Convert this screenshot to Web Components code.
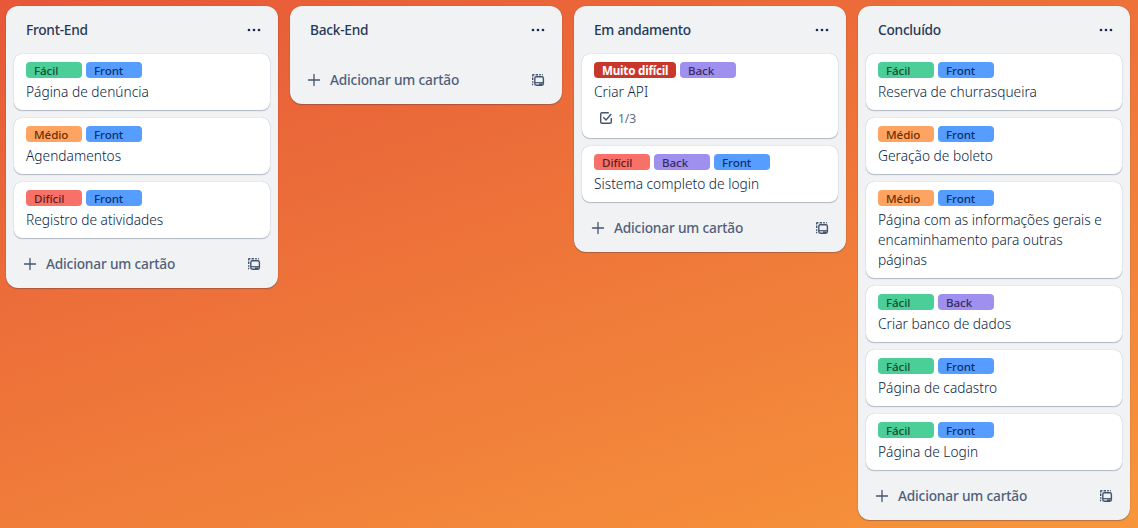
<!DOCTYPE html>
<html lang="pt-BR">
<head>
<meta charset="utf-8">
<title>Quadro</title>
<style>
html,body{margin:0;height:100%;overflow:hidden}
body{font-family:"Noto Sans","Open Sans",sans-serif;font-size:13.7px;line-height:20px;color:#253858}
</style>
</head>
<body>
<task-board>
  <task-list name="Front-End">
    <task-card><card-label slot="labels" kind="easy">Fácil</card-label><card-label slot="labels" kind="front">Front</card-label>Página de denúncia</task-card>
    <task-card><card-label slot="labels" kind="medium">Médio</card-label><card-label slot="labels" kind="front">Front</card-label>Agendamentos</task-card>
    <task-card><card-label slot="labels" kind="hard">Difícil</card-label><card-label slot="labels" kind="front">Front</card-label>Registro de atividades</task-card>
  </task-list>
  <task-list name="Back-End"></task-list>
  <task-list name="Em andamento">
    <task-card checks="1/3"><card-label slot="labels" kind="extreme">Muito difícil</card-label><card-label slot="labels" kind="back">Back</card-label>Criar API</task-card>
    <task-card><card-label slot="labels" kind="hard">Difícil</card-label><card-label slot="labels" kind="back">Back</card-label><card-label slot="labels" kind="front">Front</card-label>Sistema completo de login</task-card>
  </task-list>
  <task-list name="Concluído">
    <task-card><card-label slot="labels" kind="easy">Fácil</card-label><card-label slot="labels" kind="front">Front</card-label>Reserva de churrasqueira</task-card>
    <task-card><card-label slot="labels" kind="medium">Médio</card-label><card-label slot="labels" kind="front">Front</card-label>Geração de boleto</task-card>
    <task-card><card-label slot="labels" kind="medium">Médio</card-label><card-label slot="labels" kind="front">Front</card-label>Página com as informações gerais e encaminhamento para outras páginas</task-card>
    <task-card><card-label slot="labels" kind="easy">Fácil</card-label><card-label slot="labels" kind="back">Back</card-label>Criar banco de dados</task-card>
    <task-card><card-label slot="labels" kind="easy">Fácil</card-label><card-label slot="labels" kind="front">Front</card-label>Página de cadastro</task-card>
    <task-card><card-label slot="labels" kind="easy">Fácil</card-label><card-label slot="labels" kind="front">Front</card-label>Página de Login</task-card>
  </task-list>
</task-board>
<script>
const define = (name, html, setup) => customElements.define(name, class extends HTMLElement {
  constructor() {
    super();
    this.attachShadow({ mode: 'open' }).innerHTML = html;
  }
  connectedCallback() { if (setup) setup(this, this.shadowRoot); }
});

define('task-board', `
<style>
:host{display:flex;align-items:flex-start;gap:12px;box-sizing:border-box;width:100vw;height:100vh;padding:6px;overflow:hidden;
background:linear-gradient(162deg,#e65838 0%,#f7963b 100%)}
</style><slot></slot>`);

define('task-list', `
<style>
:host{display:flex;flex-direction:column;flex:none;box-sizing:border-box;width:272px;background:#f1f2f4;border-radius:12px;
box-shadow:0 1px 1px #091e4240,0 0 1px #091e424f}
header{display:flex;align-items:center;justify-content:space-between;height:48px;padding:0 16px 0 20px}
h2{margin:0;font-size:13.7px;line-height:20px;font-weight:500;letter-spacing:-.25px}
svg{display:block;flex:none}
.cards{display:flex;flex-direction:column;gap:8px;padding:0 8px}
footer{display:flex;align-items:center;height:50px;padding:2px 16px 0;box-sizing:border-box;color:#505f79;font-size:13.7px;font-weight:500;letter-spacing:-.18px}
footer span{flex:1;margin-left:8px}
</style>
<header><h2></h2><svg width="16" height="16" viewBox="0 0 16 16" fill="#172b4d"><circle cx="3" cy="8" r="1.35"/><circle cx="8" cy="8" r="1.35"/><circle cx="13" cy="8" r="1.35"/></svg></header>
<div class="cards"><slot></slot></div>
<footer>
<svg width="16" height="16" viewBox="0 0 16 16" fill="none" stroke="#44546f" stroke-width="1.3" stroke-linecap="round"><path d="M8 2.5v11M2.5 8h11"/></svg>
<span>Adicionar um cartão</span>
<svg width="16" height="16" viewBox="0 0 16 16" fill="none" stroke="#44546f" stroke-width="1.4"><path d="M2.7 4.4V3.2Q2.7 2.7 3.2 2.7H4.4M5.6 2.7H8M9.2 2.7H10.8M12 2.7H12.8M2.7 5.6V8M2.7 9.2V10.8M2.7 11.8V12.6H3.2"/><rect x="4.8" y="4.8" width="8.6" height="8.4" rx="1.6"/><path d="M5 10.7H13.3" stroke-width="1.2"/><path d="M9 12.2H12.4" stroke-width="1.6"/></svg>
</footer>`, (el, root) => { root.querySelector('h2').textContent = el.getAttribute('name'); });

define('task-card', `
<style>
:host{display:flex;flex-direction:column;box-sizing:border-box;padding:8px 12px;background:#fff;border-radius:8px;
box-shadow:0 1px 1px #091e4240,0 0 1px #091e424f}
.labels{display:flex;gap:4px;margin-bottom:4px}
.title{letter-spacing:.02px;font-weight:350;color:#091e42}
.badge{display:none;align-items:center;gap:4px;height:24px;margin:4px 0 0 4px;font-size:12px;color:#5e6c84}
.badge span{padding-top:1px}
:host([checks]) .badge{display:flex}
</style>
<div class="labels"><slot name="labels"></slot></div>
<div class="title"><slot></slot></div>
<div class="badge"><svg width="16" height="16" viewBox="0 0 16 16" fill="none" stroke="#44546f" stroke-width="1.4"><path d="M10.8 2.7H4Q2.7 2.7 2.7 4V12Q2.7 13.3 4 13.3H12Q13.3 13.3 13.3 12V8"/><path d="M5.3 7.3 8 10 13.3 4"/></svg><span></span></div>`,
(el, root) => { root.querySelector('.badge span').textContent = el.getAttribute('checks') || ''; });

define('card-label', `
<style>
:host{display:block;box-sizing:border-box;min-width:56px;height:16px;padding:1px 8px 0;border-radius:4px;font-size:11.6px;line-height:16px;font-weight:500;letter-spacing:-.08px;white-space:nowrap}
:host([kind=easy]){background:#4bce97;color:#164b35}
:host([kind=front]){background:#579dff;color:#09326c}
:host([kind=medium]){background:#fea362;color:#702e00}
:host([kind=hard]){background:#f87168;color:#5d1f1a}
:host([kind=back]){background:#9f8fef;color:#352c63}
:host([kind=extreme]){width:82px;background:#c9372c;color:#fff;font-weight:700;letter-spacing:-.2px}
</style><slot></slot>`);
</script>
</body>
</html>
